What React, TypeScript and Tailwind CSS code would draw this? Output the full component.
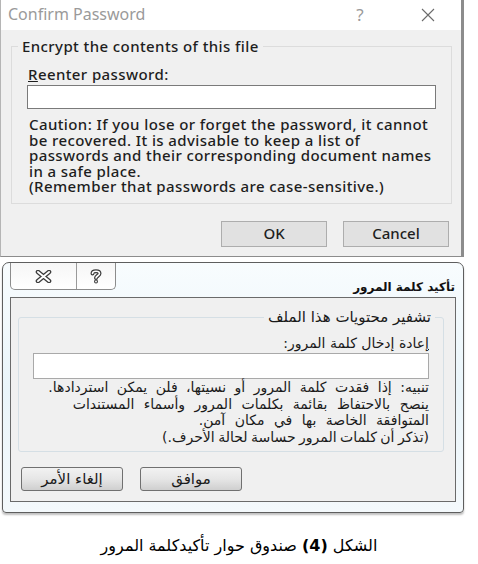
import React from "react";

const sans = { fontFamily: '"Noto Sans", "Open Sans", sans-serif' };
const arabic = { fontFamily: '"DejaVu Sans", sans-serif' };

const WinXIcon = () => (
	<svg width="14" height="14" viewBox="0 0 14 14">
		<path d="M1 1 L13 13 M13 1 L1 13" stroke="#6b6b6b" strokeWidth="1.1" fill="none" />
	</svg>
);

const AeroClose = () => (
	<svg width="17" height="13" viewBox="0 0 17 13">
		<path d="M3 2 L14 11 M14 2 L3 11" stroke="#3c3c3c" strokeWidth="4.6" strokeLinecap="round" fill="none" />
		<path d="M3 2 L14 11 M14 2 L3 11" stroke="#ffffff" strokeWidth="2" strokeLinecap="round" fill="none" />
	</svg>
);

const AeroHelp = () => (
	<svg width="12" height="15" viewBox="0 0 12 15">
		<path d="M2.5 4.5 C2.5 1.5 9.5 1.5 9.5 4.5 C9.5 6.5 6 7 6 9" stroke="#3c3c3c" strokeWidth="4" strokeLinecap="round" fill="none" />
		<circle cx="6" cy="12.5" r="2" fill="#3c3c3c" />
		<path d="M2.5 4.5 C2.5 1.5 9.5 1.5 9.5 4.5 C9.5 6.5 6 7 6 9" stroke="#ffffff" strokeWidth="1.6" strokeLinecap="round" fill="none" />
		<circle cx="6" cy="12.5" r="0.9" fill="#ffffff" />
	</svg>
);

const EnglishDialog = () => (
	<div className="w-[464px] h-[257px] bg-white border-l border-l-[#b5b5b5] border-r-[3px] border-r-[#8c8c8c] border-b border-b-[#8c8c8c] flex flex-col">
		{/* title bar */}
		<div className="h-[30px] flex items-center pl-[7px] text-[16px] text-[#9a9a9a]" style={sans}>
			<span className="flex-1 -mt-[2px]">Confirm Password</span>
			<span className="w-[14px] text-center mr-[54px] text-[17px]">?</span>
			<span className="mr-[26px] flex items-center"><WinXIcon /></span>
		</div>
		{/* body */}
		<div className="flex-1 bg-[#f0f0f0] pl-[10px] pr-[10px] pt-[6px] text-[#1e1e1e] font-medium tracking-[0.4px]" style={sans}>
			<fieldset className="border border-[#dcdcdc] px-[15px] pb-[8px]">
				<legend className="-ml-[9px] px-[4px] text-[15px] leading-[21px]">Encrypt the contents of this file</legend>
				<div className="text-[15px] leading-[20px] mt-[7px] pl-[1px]">
					<span className="underline">R</span>eenter password:
				</div>
				<div className="h-[24px] w-[409px] mt-[1px] bg-white border border-[#7a7a7a]" />
				<p className="text-[15px] leading-[15.5px] mt-[8px] pl-[2px] whitespace-nowrap">
					Caution: If you lose or forget the password, it cannot
					<br />
					be recovered. It is advisable to keep a list of
					<br />
					passwords and their corresponding document names
					<br />
					in a safe place.
					<br />
					(Remember that passwords are case-sensitive.)
				</p>
			</fieldset>
			<div className="flex justify-end gap-[16px] mt-[17px] pr-[2px] tracking-normal">
				<button className="w-[106px] h-[26px] bg-[#e1e1e1] border border-[#adadad] text-[15px]">OK</button>
				<button className="w-[106px] h-[26px] bg-[#e1e1e1] border border-[#adadad] text-[15px]">Cancel</button>
			</div>
		</div>
	</div>
);

const AeroButton = ({ label }: { label: string }) => (
	<button
		className="w-[102px] h-[24px] rounded-[3px] border border-[#707070] bg-gradient-to-b from-[#f2f2f2] via-[#e6e6e6] to-[#cfcfcf] text-[15px] leading-[20px] text-[#1a1a1a]"
		style={arabic}
	>
		{label}
	</button>
);

const ArabicDialog = () => (
	<div className="ml-[2px] w-[462px] h-[251px] rounded-t-[7px] rounded-b-[4px] border border-[#5e5e5e] bg-gradient-to-b from-[#f8fcfe] via-[#eaf5fa] to-[#f4f9fc] flex flex-col px-[7px] shadow-[0_2px_2px_rgba(0,0,0,0.25)]">
		{/* title bar */}
		<div className="h-[34px] flex items-start justify-between" dir="ltr">
			<div className="flex h-[27px] w-[106px] border border-t-0 border-[#8c8c8c] rounded-b-[5px] bg-gradient-to-b from-[#f6f6f6] to-[#ffffff]">
				<div className="w-[66px] flex items-center justify-center border-r border-[#9a9a9a]"><AeroClose /></div>
				<div className="flex-1 flex items-center justify-center"><AeroHelp /></div>
			</div>
			<div className="pt-[14px] text-[12px] font-bold text-[#111] leading-[20px] pr-[1px]" dir="rtl" style={arabic}>
				تأكيد كلمة المرور
			</div>
		</div>
		{/* inner panel */}
		<div className="h-[205px] bg-[#f0f0f0] border border-[#6a6a6a] pl-[9px] pr-[11px] pt-[10px] text-[#1a1a1a]" dir="rtl" style={arabic}>
			<fieldset className="border border-[#d5dfe5] rounded-[3px] pr-[14px] pl-[14px] pb-[6px]">
				<legend className="-mr-[6px] px-[4px] text-[15px] leading-[18px]">تشفير محتويات هذا الملف</legend>
				<div className="text-[14px] leading-[18px] mt-[8px]">
					<span className="underline">إ</span>عادة إدخال كلمة المرور:
				</div>
				<div className="h-[26px] w-[396px] mt-[1px] bg-white border border-[#a9a9a9]" />
				<div className="text-[14px] leading-[16.5px] w-[396px] whitespace-nowrap">
					<div className="[word-spacing:4px]">تنبيه: إذا فقدت كلمة المرور أو نسيتها، فلن يمكن استردادها.</div>
					<div className="[word-spacing:5px]">ينصح بالاحتفاظ بقائمة بكلمات المرور وأسماء المستندات</div>
					<div className="[word-spacing:5px]">المتوافقة الخاصة بها في مكان آمن.</div>
					<div className="[word-spacing:-1px]">(تذكر أن كلمات المرور حساسة لحالة الأحرف.)</div>
				</div>
			</fieldset>
			<div className="flex justify-end gap-[17px] mt-[15px] pl-[1px]">
				<AeroButton label="موافق" />
				<AeroButton label="إلغاء الأمر" />
			</div>
		</div>
	</div>
);

const App = () => {
	return (
		<div className="w-[478px] h-[564px] bg-white overflow-hidden">
			<EnglishDialog />
			<div className="h-[5px]" />
			<ArabicDialog />
			<div className="mt-[21px] text-center text-[16px] text-black" dir="rtl" style={arabic}>
				الشكل <span className="font-bold">(4)</span> صندوق حوار تأكيدكلمة المرور
			</div>
		</div>
	);
};

export default App;
